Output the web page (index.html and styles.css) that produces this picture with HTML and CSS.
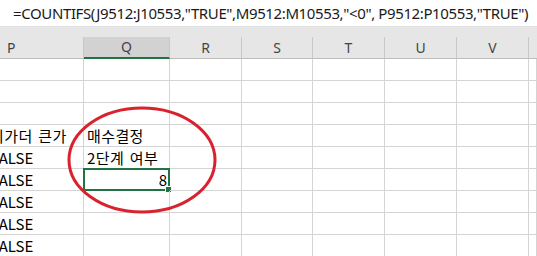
FILE: index.html
```html
<!DOCTYPE html>
<html lang="ko">
<head>
  <meta charset="UTF-8" />
  <title>COUNTIFS</title>
  <link rel="stylesheet" href="styles.css">
</head>
<body>
<div class="formula-bar">
  <span class="formula">=COUNTIFS(J9512:J10553,"TRUE",M9512:M10553,"&lt;0", P9512:P10553,"TRUE")</span>
</div>
<div class="strip"></div>

<div class="sheet">
  <div class="col-head">P</div>
  <div class="col-head selected">Q</div>
  <div class="col-head">R</div>
  <div class="col-head">S</div>
  <div class="col-head">T</div>
  <div class="col-head">U</div>
  <div class="col-head">V</div>
  <div class="col-head last"></div>

  <!-- row 1 -->
  <div class="cell"></div><div class="cell"></div><div class="cell"></div><div class="cell"></div>
  <div class="cell"></div><div class="cell"></div><div class="cell"></div><div class="cell"></div>
  <!-- row 2 -->
  <div class="cell"></div><div class="cell"></div><div class="cell"></div><div class="cell"></div>
  <div class="cell"></div><div class="cell"></div><div class="cell"></div><div class="cell"></div>
  <!-- row 3 -->
  <div class="cell"></div><div class="cell"></div><div class="cell"></div><div class="cell"></div>
  <div class="cell"></div><div class="cell"></div><div class="cell"></div><div class="cell"></div>
  <!-- row 4 -->
  <div class="cell clip kr">이가더 큰가</div><div class="cell kr">매수결정</div><div class="cell"></div><div class="cell"></div>
  <div class="cell"></div><div class="cell"></div><div class="cell"></div><div class="cell"></div>
  <!-- row 5 -->
  <div class="cell clip">FALSE</div><div class="cell kr">2단계 여부</div><div class="cell"></div><div class="cell"></div>
  <div class="cell"></div><div class="cell"></div><div class="cell"></div><div class="cell"></div>
  <!-- row 6 -->
  <div class="cell clip">FALSE</div><div class="cell active">8<span class="handle"></span></div><div class="cell"></div><div class="cell"></div>
  <div class="cell"></div><div class="cell"></div><div class="cell"></div><div class="cell"></div>
  <!-- row 7 -->
  <div class="cell clip">FALSE</div><div class="cell"></div><div class="cell"></div><div class="cell"></div>
  <div class="cell"></div><div class="cell"></div><div class="cell"></div><div class="cell"></div>
  <!-- row 8 -->
  <div class="cell clip">FALSE</div><div class="cell"></div><div class="cell"></div><div class="cell"></div>
  <div class="cell"></div><div class="cell"></div><div class="cell"></div><div class="cell"></div>
  <!-- row 9 -->
  <div class="cell clip">FALSE</div><div class="cell"></div><div class="cell"></div><div class="cell"></div>
  <div class="cell"></div><div class="cell"></div><div class="cell"></div><div class="cell"></div>
</div>

<svg class="circle" width="537" height="256" viewBox="0 0 537 256">
  <ellipse cx="142" cy="160" rx="73" ry="52" fill="none" stroke="#d8232f" stroke-width="3"/>
</svg>
</body>
</html>
```

FILE: styles.css
```css
body {
  margin: 0;
  width: 537px;
  height: 256px;
  overflow: hidden;
  background: #fff;
  font-family: "Noto Sans CJK KR", "Noto Sans", sans-serif;
  position: relative;
}
.formula-bar {
  height: 26px;
  border-bottom: 1px solid #e1e1e1;
  background: #fff;
  padding-left: 13px;
  white-space: nowrap;
  overflow: hidden;
}
.formula {
  font-family: "Noto Sans", sans-serif;
  font-size: 15px;
  letter-spacing: -0.38px;
  line-height: 24px;
  color: #1a1a1a;
}
.strip {
  height: 10px;
  background: #e6e6e6;
}
.sheet {
  display: grid;
  grid-template-columns: 84px 86px 72px 71px 72px 72px 72px 8px;
  grid-template-rows: 22px repeat(9, 22px);
}
.col-head {
  background: #e6e6e6;
  border-right: 1px solid #c8c8c8;
  border-bottom: 1px solid #bdbdbd;
  font-family: "Noto Sans", sans-serif;
  font-size: 14px;
  color: #444;
  text-align: center;
  line-height: 21px;
}
.col-head:first-child {
  text-align: left;
  padding-left: 7px;
}
.col-head.selected {
  background: #d2d2d2;
  border-bottom: 2px solid #217346;
  line-height: 20px;
}
.col-head.last {
  border-right: none;
}
.cell {
  border-right: 1px solid #d4d4d4;
  border-bottom: 1px solid #d4d4d4;
  font-size: 15px;
  line-height: 21px;
  padding-left: 3px;
  color: #000;
  white-space: nowrap;
  overflow: hidden;
  position: relative;
}
.cell.kr {
  letter-spacing: 0.4px;
  word-spacing: 1px;
}
.cell.clip {
  padding-left: 0;
  text-indent: -9px;
}
.cell.clip.kr {
  text-indent: -10px;
}
.cell.active {
  margin: -1px 0 0 -1px;
  border: 2px solid #217346;
  text-align: right;
  padding-right: 1px;
  line-height: 19px;
  overflow: visible;
}
.handle {
  position: absolute;
  right: -4px;
  bottom: -4px;
  width: 5px;
  height: 5px;
  background: #217346;
  border: 1px solid #fff;
}
.circle {
  position: absolute;
  left: 0;
  top: 0;
  pointer-events: none;
}
```
